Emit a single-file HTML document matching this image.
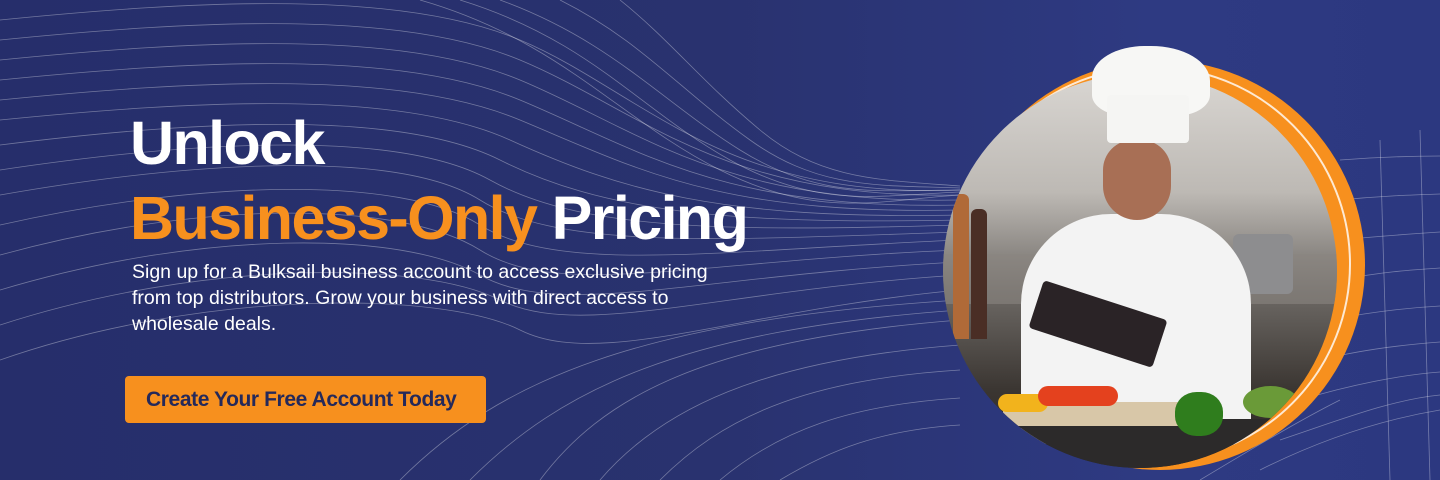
<!DOCTYPE html>
<html><head><meta charset="utf-8"><style>
*{margin:0;padding:0;box-sizing:border-box}
body{width:1440px;height:480px;overflow:hidden;background:#283170;font-family:"Liberation Sans",sans-serif;position:relative}
.bg{position:absolute;inset:0;background:linear-gradient(90deg,#262e6b 0%,#29326f 50%,#2e3a82 80%,#2c3880 100%)}
svg.lines{position:absolute;left:0;top:0}
.h{position:absolute;left:130px;font-weight:bold;color:#fff;font-size:61px;letter-spacing:-1.6px;white-space:nowrap}
.o{color:#f7901e}
.p{position:absolute;left:132px;top:259px;color:#fff;font-size:19.5px;line-height:26px;letter-spacing:0px;width:590px}
.btn{position:absolute;left:125px;top:376px;width:361px;height:47px;background:#f7901e;border-radius:4px;color:#25295a;font-size:21px;font-weight:bold;letter-spacing:-0.4px;line-height:47px;padding-left:21px;white-space:nowrap}
</style></head><body>
<div class="bg"></div>
<svg class="lines" width="1440" height="480" viewBox="0 0 1440 480" fill="none" stroke="#ffffff" stroke-opacity="0.35" stroke-width="0.8">
<g>
<path d="M0 20 C200 0 400 -10 520 40 S720 200 960 190"/>
<path d="M0 40 C200 20 400 10 520 60 S720 200 960 195"/>
<path d="M0 60 C200 40 400 30 520 80 S720 205 960 200"/>
<path d="M0 80 C200 60 400 50 520 100 S720 210 960 205"/>
<path d="M0 100 C200 80 400 70 520 120 S720 215 960 210"/>
<path d="M0 120 C200 100 400 90 510 140 S720 220 960 215"/>
<path d="M0 145 C200 120 400 110 500 160 S720 225 960 220"/>
<path d="M0 170 C200 140 400 130 490 180 S720 232 960 225"/>
<path d="M0 195 C200 160 400 150 480 200 S720 240 960 232"/>
<path d="M0 225 C200 180 400 175 480 225 S720 250 960 240"/>
<path d="M0 255 C200 200 400 200 480 250 S700 260 960 250"/>
<path d="M0 290 C200 230 400 230 480 275 S700 275 960 262"/>
<path d="M0 325 C200 260 420 260 500 300 S720 290 960 275"/>
<path d="M0 360 C200 290 440 290 520 330 S740 310 960 290"/>
<path d="M420 0 C560 40 620 120 720 170 S880 200 960 195"/>
<path d="M460 0 C590 40 640 110 730 160 S880 195 960 192"/>
<path d="M500 0 C610 40 660 100 740 150 S880 190 960 190"/>
<path d="M560 0 C640 40 680 90 750 140 S880 185 960 188"/>
<path d="M620 0 C670 40 700 80 760 130 S880 180 960 186"/>
<path d="M540 480 C600 400 700 340 960 320"/>
<path d="M600 480 C660 410 760 360 960 345"/>
<path d="M660 480 C720 420 800 380 960 370"/>
<path d="M720 480 C780 430 850 405 960 398"/>
<path d="M780 480 C830 450 880 430 960 425"/>
<path d="M400 480 C500 380 640 320 960 300"/>
<path d="M470 480 C560 390 680 330 960 310"/>
<path d="M1260 470 C1320 440 1380 420 1440 410"/>
<path d="M1280 440 C1340 420 1390 400 1440 395"/>
<path d="M1300 400 C1350 385 1400 375 1440 372"/>
<path d="M1320 360 C1360 350 1400 345 1440 342"/>
<path d="M1330 320 C1370 312 1405 308 1440 306"/>
<path d="M1340 280 C1380 272 1410 270 1440 268"/>
<path d="M1340 240 C1380 236 1410 234 1440 232"/>
<path d="M1340 200 C1380 196 1410 195 1440 194"/>
<path d="M1340 160 C1380 157 1410 156 1440 156"/>
<path d="M1380 140 L1390 480"/><path d="M1420 130 L1430 480"/>
<path d="M1200 480 C1250 450 1300 420 1340 400"/>
</g>
</svg>
<div style="position:absolute;left:955px;top:60px;width:410px;height:410px;border-radius:50%;background:#f7901e"></div>
<div style="position:absolute;left:955px;top:66px;width:396px;height:396px;border-radius:50%;border:2px solid #fff;opacity:.8"></div>
<div style="position:absolute;left:943px;top:74px;width:394px;height:394px;border-radius:50%;overflow:hidden;background:linear-gradient(180deg,#d9d6d2 0%,#bdb9b4 30%,#6e6a66 55%,#3b3632 80%,#2a2623 100%)">
  <div style="position:absolute;left:0;top:180px;width:394px;height:50px;background:#8b8580;opacity:.6"></div>
  <div style="position:absolute;left:10px;top:120px;width:16px;height:145px;background:#b06a38;border-radius:6px 6px 0 0"></div>
  <div style="position:absolute;left:28px;top:135px;width:16px;height:130px;background:#4a2e25;border-radius:6px 6px 0 0"></div>
  <div style="position:absolute;left:290px;top:160px;width:60px;height:60px;background:#8d8d8f;border-radius:6px"></div>
  <div style="position:absolute;left:78px;top:140px;width:230px;height:230px;background:#f3f3f3;border-radius:90px 90px 10px 10px"></div>
  <div style="position:absolute;left:160px;top:66px;width:68px;height:80px;background:#a86f55;border-radius:30px 30px 34px 34px"></div>
  <div style="position:absolute;left:90px;top:225px;width:130px;height:50px;background:#2a2326;transform:rotate(18deg);border-radius:4px"></div>
  <div style="position:absolute;left:0;top:345px;width:394px;height:60px;background:#2c2a2a"></div>
  <div style="position:absolute;left:60px;top:328px;width:180px;height:24px;background:#d8c7a8;border-radius:4px"></div>
  <div style="position:absolute;left:55px;top:320px;width:50px;height:18px;background:#f2b31c;border-radius:10px"></div>
  <div style="position:absolute;left:95px;top:312px;width:80px;height:20px;background:#e4411e;border-radius:10px"></div>
  <div style="position:absolute;left:232px;top:318px;width:48px;height:44px;background:#2f7d1d;border-radius:45%"></div>
  <div style="position:absolute;left:300px;top:312px;width:55px;height:32px;background:#6a9a38;border-radius:50%"></div>
</div>
<div style="position:absolute;left:1092px;top:46px;width:118px;height:70px;background:#f7f7f5;border-radius:45% 50% 30% 30%"></div>
<div style="position:absolute;left:1107px;top:95px;width:82px;height:48px;background:#f5f5f3;border-radius:4px"></div>
<div class="h" style="top:108px">Unlock</div>
<div class="h" style="top:183px"><span class="o">Business-Only</span> Pricing</div>
<div class="p">Sign up for a Bulksail business account to access exclusive pricing from top distributors. Grow your business with direct access to wholesale deals.</div>
<div class="btn">Create Your Free Account Today</div>
</body></html>
